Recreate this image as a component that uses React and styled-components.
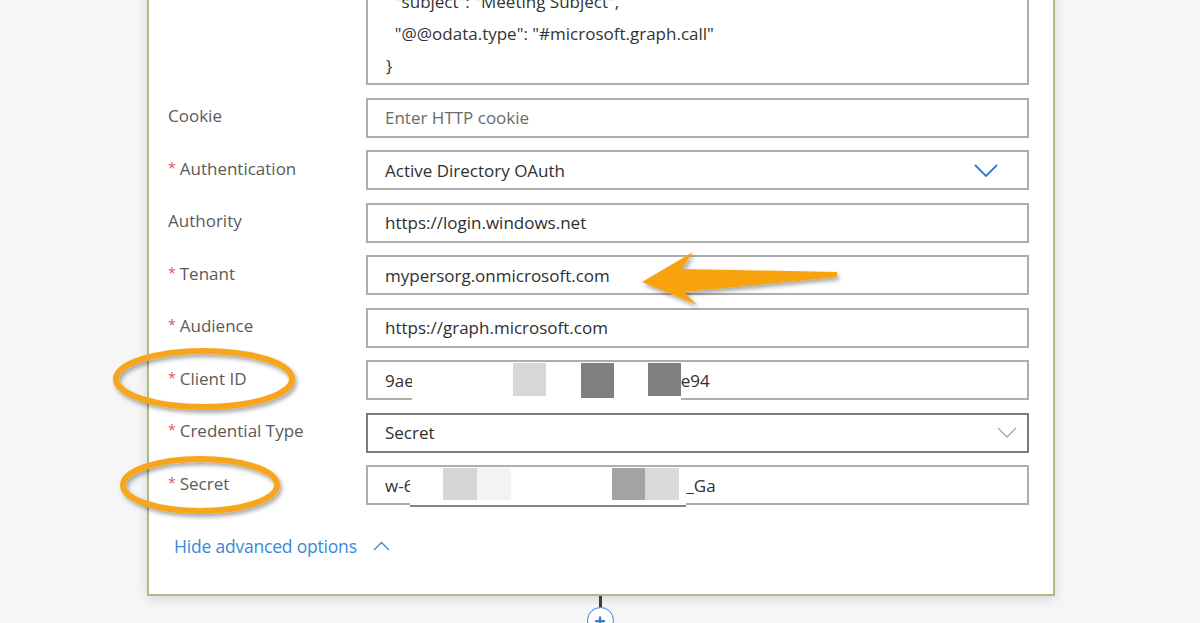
import React from "react";
import styled, { createGlobalStyle } from "styled-components";

const Global = createGlobalStyle`
  html, body { margin: 0; padding: 0; }
  body {
    background: #f6f6f6;
    font-family: "Open Sans", "Noto Sans", sans-serif;
  }
`;

const Page = styled.div`
  position: relative;
  height: 623px;
  overflow: hidden;
  display: flex;
  flex-direction: column;
  align-items: center;
  & > * { flex-shrink: 0; }
`;

const Card = styled.section`
  box-sizing: border-box;
  width: 908px;
  margin: -22px 0 0 2px;
  background: #fff;
  border: 2px solid #a7bf83;
  border-top: none;
  box-shadow: 0 3px 10px rgba(0, 0, 0, 0.13);
  padding: 0 24px 37px 19px;
`;

const Grid = styled.div`
  display: grid;
  grid-template-columns: 198px 1fr;
  row-gap: 12.55px;
  align-items: center;
`;

const CodeBox = styled.div`
  grid-column: 2;
  box-sizing: border-box;
  border: 2px solid #adadad;
  border-top: none;
  padding: 8px 16px 1px 18px;
  font-size: 17px;
  line-height: 32px;
  color: #333;
  white-space: pre;
`;

const Label = styled.div`
  font-size: 17px;
  color: #5a5a5a;
  padding-bottom: 4px;
  white-space: nowrap;
`;

const Star = styled.span`
  color: #e2545a;
  font-size: 14px;
  margin-right: 4px;
  vertical-align: 2px;
`;

const Field = styled.div`
  position: relative;
  box-sizing: border-box;
  height: 40px;
  border: 2px solid ${(p) => (p.$active ? "#7a7a7a" : "#adadad")};
  display: flex;
  align-items: center;
  padding: 0 ${(p) => p.$padRight || 16}px 0 17px;
  font-size: 17px;
  color: ${(p) => (p.$placeholder ? "#6a6a6a" : "#2f2f2f")};
  white-space: nowrap;
`;

const Value = styled.span`
  flex: ${(p) => (p.$grow ? 1 : "none")};
`;

const Redact = styled.div`
  align-self: stretch;
  display: flex;
  background: #fff;
  margin: 0 0 ${(p) => (p.$underline ? -4 : -3)}px ${(p) => p.$shift}px;
  border-bottom: ${(p) => (p.$underline ? "2px solid #858585" : "none")};
`;

const Swatch = styled.div`
  flex: none;
  align-self: flex-start;
  margin-top: 1px;
  height: ${(p) => p.$h || 33}px;
  width: ${(p) => p.$w}px;
  background: ${(p) => p.$c};
`;

const LinkRow = styled.div`
  display: flex;
  align-items: center;
  gap: 16px;
  margin: 30px 0 0 6px;
  color: #3a88d8;
  font-size: 17.5px;
  letter-spacing: -0.2px;
  line-height: 22px;
`;

const Connector = styled.div`
  display: flex;
  flex-direction: column;
  align-items: center;
`;

const Stem = styled.div`
  width: 3px;
  height: 11px;
  background: #3c3c3c;
`;

const PlusCircle = styled.div`
  box-sizing: border-box;
  width: 27px;
  height: 27px;
  flex: none;
  border-radius: 50%;
  border: 1.5px solid #2b7cd3;
  background: #fff;
  display: flex;
  align-items: center;
  justify-content: center;
  color: #2b7cd3;
  font-size: 20px;
  font-weight: 700;
  line-height: 1;
`;

const Overlay = styled.svg`
  position: absolute;
  left: 0;
  top: 0;
  pointer-events: none;
`;

const Chevron = ({ w, h, color, sw }) => (
  <svg width={w} height={h} viewBox={`0 0 ${w} ${h}`} style={{ flex: "none" }}>
    <polyline
      points={`1,1 ${w / 2},${h - 1} ${w - 1},1`}
      fill="none"
      stroke={color}
      strokeWidth={sw}
    />
  </svg>
);

const clientSwatches = [
  { w: 101, c: "#fff" },
  { w: 33, c: "#d7d7d7" },
  { w: 35, c: "#fff" },
  { w: 33, c: "#808080", h: 35 },
  { w: 34, c: "#fff" },
  { w: 33, c: "#808080", h: 33 },
];

const secretSwatches = [
  { w: 33, c: "#fff" },
  { w: 34, c: "#d5d5d5" },
  { w: 34, c: "#f3f3f3" },
  { w: 101, c: "#fff" },
  { w: 33, c: "#a3a3a3" },
  { w: 34, c: "#d9d9d9" },
  { w: 7, c: "#fff" },
];

const Req = ({ children }) => (
  <Label>
    <Star>*</Star>
    {children}
  </Label>
);

export default function App() {
  return (
    <>
      <Global />
      <Page>
        <Card>
          <Grid>
            <CodeBox>{`  "subject": "Meeting Subject",\n  "@@odata.type": "#microsoft.graph.call"\n}`}</CodeBox>

            <Label>Cookie</Label>
            <Field $placeholder>Enter HTTP cookie</Field>

            <Req>Authentication</Req>
            <Field $padRight={29}>
              <Value $grow>Active Directory OAuth</Value>
              <Chevron w={24} h={13} color="#2b7cd3" sw={1.8} />
            </Field>

            <Label>Authority</Label>
            <Field>https://login.windows.net</Field>

            <Req>Tenant</Req>
            <Field>mypersorg.onmicrosoft.com</Field>

            <Req>Audience</Req>
            <Field>https://graph.microsoft.com</Field>

            <Req>Client ID</Req>
            <Field>
              <Value>9ae</Value>
              <Redact $shift={-2}>
                {clientSwatches.map((s, i) => (
                  <Swatch key={i} $w={s.w} $c={s.c} $h={s.h} />
                ))}
              </Redact>
              <Value>e94</Value>
            </Field>

            <Req>Credential Type</Req>
            <Field $active $padRight={10}>
              <Value $grow>Secret</Value>
              <Chevron w={20} h={11} color="#a8a8a8" sw={1.3} />
            </Field>

            <Req>Secret</Req>
            <Field>
              <Value>w-6</Value>
              <Redact $shift={-3} $underline>
                {secretSwatches.map((s, i) => (
                  <Swatch key={i} $w={s.w} $c={s.c} $h={32} />
                ))}
              </Redact>
              <Value>_Ga</Value>
            </Field>
          </Grid>

          <LinkRow>
            <span>Hide advanced options</span>
            <svg width="17" height="10" viewBox="0 0 17 10">
              <polyline points="1,9 8.5,1.5 16,9" fill="none" stroke="#3a88d8" strokeWidth="1.3" />
            </svg>
          </LinkRow>
        </Card>
        <Connector>
          <Stem />
          <PlusCircle>+</PlusCircle>
        </Connector>

        <Overlay width="1200" height="623" viewBox="0 0 1200 623">
          <defs>
            <filter id="sh" x="-20%" y="-40%" width="140%" height="180%">
              <feDropShadow dx="2" dy="3" stdDeviation="2" floodColor="#000" floodOpacity="0.35" />
            </filter>
          </defs>
          <g filter="url(#sh)">
            <polygon
              points="642,282 693,252 682,269 837,272 837,277 684,292 697,305"
              fill="#f8a20e"
            />
            <ellipse cx="204" cy="379" rx="88" ry="28" fill="none" stroke="#f6a51a" strokeWidth="6" />
            <ellipse cx="200" cy="485" rx="77" ry="26" fill="none" stroke="#f6a51a" strokeWidth="6" />
          </g>
        </Overlay>
      </Page>
    </>
  );
}
